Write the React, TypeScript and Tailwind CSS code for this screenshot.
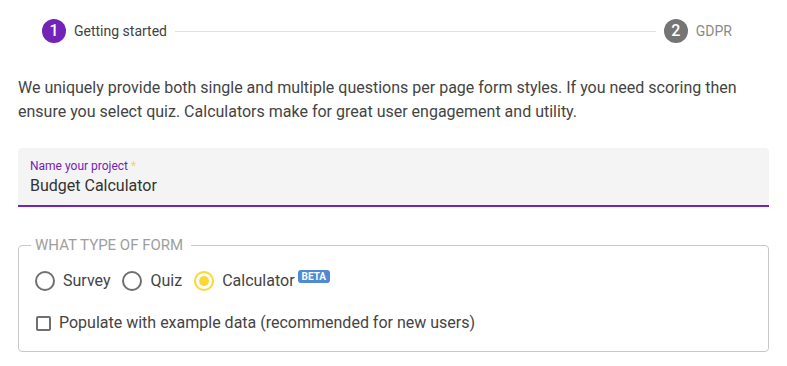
import React from "react";

function Radio({ label, checked }: { label: string; checked?: boolean }) {
  return (
    <label className="flex items-center gap-2">
      <span
        className={
          checked
            ? "flex h-5 w-5 items-center justify-center rounded-full border-2 border-[#fdd835]"
            : "flex h-5 w-5 items-center justify-center rounded-full border-2 border-[#707070]"
        }
      >
        {checked && <span className="h-[10px] w-[10px] rounded-full bg-[#fdd835]" />}
      </span>
      <span className="text-[16px] leading-6 text-[#444]">{label}</span>
    </label>
  );
}

export default function App() {
  return (
    <div
      className="w-[787px] h-[366px] bg-white px-[18px]"
      style={{ fontFamily: "Roboto, 'Noto Sans', sans-serif" }}
    >
      {/* Stepper */}
      <div className="flex h-[62px] items-center pl-6 pr-[37px]">
        <div className="flex items-center gap-2">
          <span className="flex h-6 w-6 items-center justify-center rounded-full bg-[#7323b5] text-[16px] font-medium text-white">
            1
          </span>
          <span className="text-[14px] text-[#424242]">Getting started</span>
        </div>
        <div className="mx-2 h-px flex-1 bg-[#e0e0e0]" />
        <div className="flex items-center gap-2">
          <span className="flex h-6 w-6 items-center justify-center rounded-full bg-[#757575] text-[16px] font-medium text-white">
            2
          </span>
          <span className="text-[14px] text-[#8a8a8a]">GDPR</span>
        </div>
      </div>

      {/* Paragraph */}
      <p className="mt-[14px] text-[16px] leading-6 text-[#444]">
        We uniquely provide both single and multiple questions per page form styles. If you need scoring then
        ensure you select quiz. Calculators make for great user engagement and utility.
      </p>

      {/* Input */}
      <div className="mt-6 rounded-t-[4px] border-b-2 border-[#7323b5] bg-[#f4f4f4] px-3 pt-[10px] pb-[7px]">
        <div className="text-[12px] leading-4 text-[#7323b5]">
          Name your project <span className="text-[#fdd835]">*</span>
        </div>
        <div className="text-[16px] leading-6 text-[#333]">Budget Calculator</div>
      </div>

      {/* Fieldset */}
      <fieldset className="mt-[26px] rounded-[4px] border border-[#c8c8c8] px-4 pb-4">
        <legend className="-ml-1 pl-1 pr-2 text-[15px] leading-6 text-[#9e9e9e]">WHAT TYPE OF FORM</legend>
        <div className="mt-3 flex items-center gap-3">
          <Radio label="Survey" />
          <Radio label="Quiz" />
          <div className="flex items-center">
            <Radio label="Calculator" checked />
            <span className="ml-[3px] -mt-[10px] rounded-[3px] bg-[#4f8ad2] px-[4px] text-[10px] font-bold leading-[13px] text-white">
              BETA
            </span>
          </div>
        </div>
        <label className="mt-[18px] flex items-center gap-2 pl-px">
          <span className="h-[15px] w-[15px] rounded-[2px] border-2 border-[#707070]" />
          <span className="text-[16px] leading-6 text-[#444]">
            Populate with example data (recommended for new users)
          </span>
        </label>
      </fieldset>
    </div>
  );
}
